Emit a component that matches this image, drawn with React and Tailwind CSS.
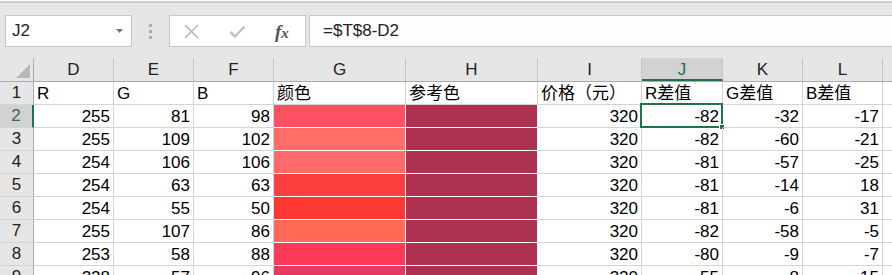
import React from 'react';

const cols = [
    { key: 'D', w: 'w-[80px]' },
    { key: 'E', w: 'w-[80px]' },
    { key: 'F', w: 'w-[80px]' },
    { key: 'G', w: 'w-[132px]' },
    { key: 'H', w: 'w-[132px]' },
    { key: 'I', w: 'w-[104px]' },
    { key: 'J', w: 'w-[81px]' },
    { key: 'K', w: 'w-[80px]' },
    { key: 'L', w: 'w-[80px]' },
];

const header = ['R', 'G', 'B', '颜色', '参考色', '价格（元）', 'R差值', 'G差值', 'B差值'];

// r, g, b, price, dr, dg, db
const rows = [
    [255, 81, 98, 320, -82, -32, -17],
    [255, 109, 102, 320, -82, -60, -21],
    [254, 106, 106, 320, -81, -57, -25],
    [254, 63, 63, 320, -81, -14, 18],
    [254, 55, 50, 320, -81, -6, 31],
    [255, 107, 86, 320, -82, -58, -5],
    [253, 58, 88, 320, -80, -9, -7],
    [228, 57, 96, 320, -55, -8, -15],
];

const RowHead = ({ n, active }) => (
    <div className={`w-[34px] shrink-0 h-[23px] flex items-start justify-center leading-[22px] border-b border-[#d4d4d4] ${active ? 'bg-[#d2d2d2] text-[#217346] border-r-2 border-r-[#217346]' : 'bg-[#e6e6e6] text-[#222] border-r border-r-[#ababab]'}`}>
        {n}
    </div>
);

const Cell = ({ w, children, align = 'right', className = '', style }) => (
    <div
        className={`${w} shrink-0 h-[23px] relative border-r border-b leading-[22px] pt-px overflow-visible whitespace-nowrap ${align === 'right' ? 'text-right pr-[3px]' : 'text-left pl-[3px]'} ${className || 'border-[#d4d4d4]'}`}
        style={style}>
        {children}
    </div>
);

export default function App() {
    return (
        <div className="w-[892px] h-[275px] overflow-hidden bg-white text-[17px] text-black"
            style={{ fontFamily: '"Liberation Sans", "Noto Sans CJK SC", sans-serif' }}>

            {/* formula bar */}
            <div className="bg-[#e6e6e6] border-t-[2px] border-[#d0d0d0] mt-[1px] h-[57px] pt-[12px] flex items-start">
                <div className="ml-[5px] w-[127px] h-[32px] bg-white border border-[#c6c6c6] flex items-center justify-between pl-[6px] pr-[8px]">
                    <span className="text-[17px] text-[#222]">J2</span>
                    <svg width="7" height="4" viewBox="0 0 7 4"><path d="M0 0h7L3.5 4z" fill="#777" /></svg>
                </div>
                <div className="w-[37px] h-[32px] flex flex-col items-center justify-center gap-[3px]">
                    <span className="w-[3px] h-[3px] bg-[#ababab]" />
                    <span className="w-[3px] h-[3px] bg-[#ababab]" />
                    <span className="w-[3px] h-[3px] bg-[#ababab]" />
                </div>
                <div className="w-[137px] h-[32px] bg-white border border-[#c6c6c6] flex items-center pl-[13px] gap-[29px]">
                    <svg width="17" height="17" viewBox="0 0 17 17"><path d="M2 2L15 15M15 2L2 15" stroke="#b4b4b4" strokeWidth="1.5" /></svg>
                    <svg width="17" height="17" viewBox="0 0 17 17"><path d="M1.5 9L6 13.5L15.5 3.5" stroke="#c3c3c3" strokeWidth="2.5" fill="none" /></svg>
                    <span className="text-[#555] font-bold italic leading-none" style={{ fontFamily: '"Liberation Serif", serif' }}>
                        <span className="text-[19px]">f</span><span className="text-[15px]">x</span>
                    </span>
                </div>
                <div className="ml-[3px] flex-1 h-[32px] bg-[#fdfdfd] border border-[#c6c6c6] border-r-0 flex items-center pl-[13px]">
                    <span className="text-[17px] text-[#222]">=$T$8-D2</span>
                </div>
            </div>

            {/* column headers */}
            <div className="flex h-[23px] bg-[#e6e6e6] border-b border-[#ababab] box-content">
                <div className="w-[34px] shrink-0 h-[23px] border-r border-[#ababab] relative">
                    <svg className="absolute left-[16px] top-[6px]" width="14" height="14" viewBox="0 0 14 14"><path d="M14 0V14H0z" fill="#b7b7b7" /></svg>
                </div>
                {cols.map(c => (
                    <div key={c.key}
                        className={`${c.w} shrink-0 h-[23px] flex items-start justify-center leading-[22px] pt-[1px] border-r border-[#c6c6c6] ${c.key === 'J' ? 'bg-[#d2d2d2] text-[#217346] border-b-2 border-b-[#217346]' : 'text-[#222]'}`}>
                        {c.key}
                    </div>
                ))}
                <div className="flex-1" />
            </div>

            {/* row 1 */}
            <div className="flex">
                <RowHead n={1} />
                {cols.map((c, i) => (
                    <Cell key={c.key} w={c.w} align="left">{header[i]}</Cell>
                ))}
                <div className="flex-1 h-[23px] border-b border-[#d4d4d4]" />
            </div>

            {rows.map((r, idx) => {
                const n = idx + 2;
                const [red, green, blue, price, dr, dg, db] = r;
                return (
                    <div key={n} className="flex">
                        <RowHead n={n} active={n === 2} />
                        <Cell w="w-[80px]">{red}</Cell>
                        <Cell w="w-[80px]">{green}</Cell>
                        <Cell w="w-[80px]">{blue}</Cell>
                        <Cell w="w-[132px]" className="border-white" style={{ background: `rgb(${red},${green},${blue})` }} />
                        <Cell w="w-[132px]" className="border-white bg-[#ad3151]" />
                        <Cell w="w-[104px]">{price}</Cell>
                        <Cell w="w-[81px]">
                            {dr}
                            {n === 2 && (
                                <div className="absolute -left-[2px] -top-[2px] w-[83px] h-[25px] border-2 border-[#217346]">
                                    <div className="absolute -right-[4px] -bottom-[4px] w-[6px] h-[6px] bg-[#217346] border border-white" />
                                </div>
                            )}
                        </Cell>
                        <Cell w="w-[80px]">{dg}</Cell>
                        <Cell w="w-[80px]">{db}</Cell>
                        <div className="flex-1 h-[23px] border-b border-[#d4d4d4]" />
                    </div>
                );
            })}
        </div>
    );
}
